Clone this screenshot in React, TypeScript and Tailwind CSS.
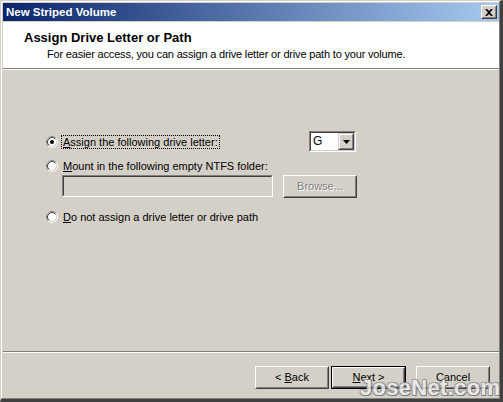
import React from "react";

const font = { fontFamily: '"Liberation Sans", Arial, sans-serif' };

function Radio({ checked }: { checked?: boolean }) {
  return (
    <svg width="12" height="12" viewBox="0 0 12 12" className="shrink-0">
      <circle cx="6" cy="6" r="5.5" fill="none" stroke="#ffffff" />
      <path d="M2.11 9.89 A5.5 5.5 0 0 1 9.89 2.11" fill="none" stroke="#808080" />
      <circle cx="6" cy="6" r="4.5" fill="#ffffff" stroke="#d4d0c8" />
      <path d="M2.82 9.18 A4.5 4.5 0 0 1 9.18 2.82" fill="none" stroke="#404040" />
      {checked && <circle cx="6" cy="6" r="2" fill="#000000" />}
    </svg>
  );
}

function Button({
  children,
  isDefault,
  disabled,
}: {
  children: React.ReactNode;
  isDefault?: boolean;
  disabled?: boolean;
}) {
  const inner = (
    <div className="h-full w-full border border-t-white border-l-white border-b-[#404040] border-r-[#404040]">
      <div className="h-full w-full border border-t-[#d4d0c8] border-l-[#d4d0c8] border-b-[#808080] border-r-[#808080] flex items-center justify-center bg-[#d4d0c8]">
        <span
          className={
            disabled
              ? "text-[#808080] [text-shadow:1px_1px_0_#ffffff]"
              : "text-black"
          }
        >
          {children}
        </span>
      </div>
    </div>
  );
  if (isDefault) {
    return (
      <div className="w-[75px] h-[23px] border border-black">{inner}</div>
    );
  }
  return <div className="w-[74px] h-[23px]">{inner}</div>;
}

export default function App() {
  return (
    <div
      className="w-[503px] h-[402px] bg-[#d4d0c8] text-[11px] leading-[13px] text-black relative overflow-hidden"
      style={font}
    >
      <div className="flex h-full w-full border-l border-t border-l-[#d4d0c8] border-t-[#d4d0c8] border-r-[3px] border-r-[#404040] border-b-[3px] border-b-[#404040]">
        <div className="flex flex-col h-full w-full border-l border-t border-l-white border-t-white border-r border-r-[#808080] border-b border-b-[#808080] pl-px pt-px">
          {/* Title bar */}
          <div className="h-[18px] shrink-0 flex items-center justify-between pl-[3px] pr-[2px] bg-[linear-gradient(to_right,#0a246a,#a6caf0)]">
            <span className="text-white font-bold text-[11.5px]">New Striped Volume</span>
            <div className="w-[16px] h-[14px] border border-t-white border-l-white border-b-[#404040] border-r-[#404040] bg-[#d4d0c8]">
              <div className="h-full w-full border border-t-[#d4d0c8] border-l-[#d4d0c8] border-b-[#808080] border-r-[#808080] flex items-center justify-center">
                <svg width="8" height="7" viewBox="0 0 8 7">
                  <path d="M0 0 L2 0 L4 2 L6 0 L8 0 L5 3.5 L8 7 L6 7 L4 5 L2 7 L0 7 L3 3.5 Z" fill="#000" />
                </svg>
              </div>
            </div>
          </div>

          {/* Header */}
          <div className="h-[47px] shrink-0 bg-white border-b border-b-[#808080] mt-px flex flex-col">
            <div className="pl-[21px] pt-[8px] font-bold text-[13px] leading-[15px]">
              Assign Drive Letter or Path
            </div>
            <div className="pl-[44px] pt-[3px] tracking-[-0.18px]">
              For easier access, you can assign a drive letter or drive path to your volume.
            </div>
          </div>
          <div className="h-px bg-white shrink-0" />

          {/* Body */}
          <div className="flex-1 flex flex-col pl-[43px]">
            <div className="mt-[61px] h-[21px] flex items-center">
              <div className="w-[263px] flex items-center">
                <Radio checked />
                <span className="ml-[3px] px-px border border-dotted border-black leading-[12px]">
                  <u>A</u>ssign the following drive letter:
                </span>
              </div>
              <div className="w-[47px] h-[21px] border border-t-[#808080] border-l-[#808080] border-b-white border-r-white">
                <div className="h-full w-full border border-t-[#404040] border-l-[#404040] border-b-[#d4d0c8] border-r-[#d4d0c8] bg-white flex items-center justify-between">
                  <span className="pl-[2px] text-[12px]">G</span>
                  <div className="w-[16px] h-[17px] border border-t-[#d4d0c8] border-l-[#d4d0c8] border-b-[#404040] border-r-[#404040] bg-[#d4d0c8]">
                    <div className="h-full w-full border border-t-white border-l-white border-b-[#808080] border-r-[#808080] flex items-center justify-center">
                      <svg width="7" height="4" viewBox="0 0 7 4">
                        <path d="M0 0 L7 0 L3.5 4 Z" fill="#000" />
                      </svg>
                    </div>
                  </div>
                </div>
              </div>
            </div>

            <div className="mt-[7px] h-[14px] flex items-center">
              <Radio />
              <span className="ml-[5px]">
                <u>M</u>ount in the following empty NTFS folder:
              </span>
            </div>

            <div className="mt-[2px] ml-[16px] flex items-start gap-[10px]">
              <div className="w-[211px] h-[22px] border border-t-[#808080] border-l-[#808080] border-b-white border-r-white">
                <div className="h-full w-full border border-t-[#404040] border-l-[#404040] border-b-[#d4d0c8] border-r-[#d4d0c8] bg-[#d4d0c8]" />
              </div>
              <Button disabled>Browse...</Button>
            </div>

            <div className="mt-[12px] h-[14px] flex items-center">
              <Radio />
              <span className="ml-[5px]">
                <u>D</u>o not assign a drive letter or drive path
              </span>
            </div>
          </div>

          {/* Separator */}
          <div className="h-px bg-[#808080] shrink-0" />
          <div className="h-px bg-white shrink-0" />

          {/* Footer */}
          <div className="h-[45px] shrink-0 flex items-start justify-end pt-[13px] pr-[9px]">
            <Button>
              &lt; <u>B</u>ack
            </Button>
            <div className="ml-[2px]">
              <Button isDefault>
                <u>N</u>ext &gt;
              </Button>
            </div>
            <div className="ml-[10px]">
              <Button>Cancel</Button>
            </div>
          </div>
        </div>
      </div>

      {/* Watermark */}
      <div className="absolute left-[360px] top-[377px] text-[22px] leading-[22px] font-bold tracking-[0.3px] text-[#eeeeee] opacity-85 [text-shadow:1px_1px_0_#6f6f6f,-1px_-1px_0_#9a9a9a,1px_-1px_0_#8a8a8a,-1px_1px_0_#8a8a8a]">
        JoseNet.com
      </div>
    </div>
  );
}
